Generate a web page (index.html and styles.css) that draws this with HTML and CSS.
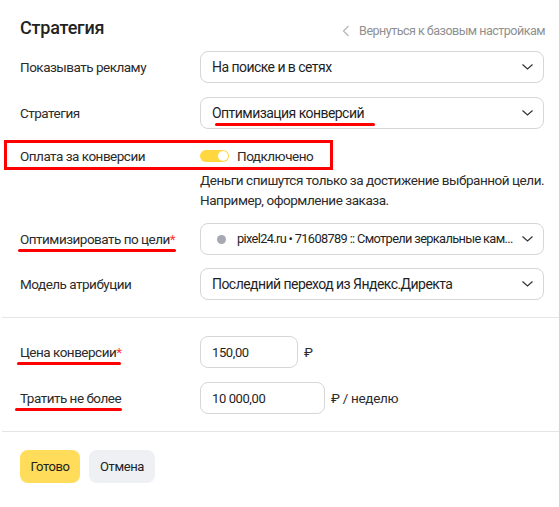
FILE: index.html
```html
<!DOCTYPE html>
<html lang="ru">
<head>
<meta charset="utf-8">
<title>Стратегия</title>
<link rel="stylesheet" href="styles.css">
</head>
<body>
<div class="panel">
  <div class="header">
    <h1 class="title">Стратегия</h1>
    <a class="back" href="#">
      <svg class="back-icon" width="8" height="12" viewBox="0 0 8 12"><path d="M6.5 1 L1.5 6 L6.5 11" fill="none" stroke="#b8b8b8" stroke-width="1.3"/></svg>
      <span>Вернуться к базовым настройкам</span>
    </a>
  </div>

  <div class="row first">
    <div class="label">Показывать рекламу</div>
    <div class="select"><span class="value">На поиске и в сетях</span><svg class="chev" width="11" height="6" viewBox="0 0 11 6"><path d="M0.5 0.5 L5.5 5 L10.5 0.5" fill="none" stroke="#333" stroke-width="1.2"/></svg></div>
  </div>

  <div class="row">
    <div class="label">Стратегия</div>
    <div class="select"><span class="value"><span class="mark mark-strategy">Оптимизация конверсий</span></span><svg class="chev" width="11" height="6" viewBox="0 0 11 6"><path d="M0.5 0.5 L5.5 5 L10.5 0.5" fill="none" stroke="#333" stroke-width="1.2"/></svg></div>
  </div>

  <div class="row toggle-row">
    <div class="callout"></div>
    <div class="label">Оплата за конверсии</div>
    <div class="toggle-wrap"><span class="toggle"><span class="knob"></span></span><span>Подключено</span></div>
  </div>
  <div class="row hint-row">
    <div></div>
    <div class="hint">Деньги спишутся только за достижение выбранной цели.<br>Например, оформление заказа.</div>
  </div>

  <div class="row goal-row">
    <div class="label"><span class="mark mark-goal">Оптимизировать по цели<span class="req">*</span></span></div>
    <div class="select"><span class="value goal"><span class="dot"></span>pixel24.ru • 71608789 :: Смотрели зеркальные кам...</span><svg class="chev" width="11" height="6" viewBox="0 0 11 6"><path d="M0.5 0.5 L5.5 5 L10.5 0.5" fill="none" stroke="#333" stroke-width="1.2"/></svg></div>
  </div>

  <div class="row attr-row">
    <div class="label">Модель атрибуции</div>
    <div class="select"><span class="value">Последний переход из Яндекс.Директа</span><svg class="chev" width="11" height="6" viewBox="0 0 11 6"><path d="M0.5 0.5 L5.5 5 L10.5 0.5" fill="none" stroke="#333" stroke-width="1.2"/></svg></div>
  </div>

  <div class="divider"></div>

  <div class="row money-first">
    <div class="label"><span class="mark mark-price">Цена конверсии<span class="req">*</span></span></div>
    <div class="field"><div class="input input-price">150,00</div><span class="unit">₽</span></div>
  </div>

  <div class="row">
    <div class="label"><span class="mark mark-limit">Тратить не более</span></div>
    <div class="field"><div class="input input-limit">10 000,00</div><span class="unit">₽ / неделю</span></div>
  </div>

  <div class="divider"></div>

  <div class="buttons">
    <button class="btn btn-primary">Готово</button>
    <button class="btn btn-secondary">Отмена</button>
  </div>
</div>
</body>
</html>
```

FILE: styles.css
```css
* { box-sizing: border-box; }

html, body {
  margin: 0;
  padding: 0;
  background: #fff;
}

body {
  font-family: Roboto, "Liberation Sans", Arial, sans-serif;
  font-size: 13.5px;
  letter-spacing: -0.5px;
  color: #2b2b2b;
}

.panel {
  padding: 16px 15px 20px 20px;
}

.header {
  display: flex;
  align-items: center;
  justify-content: space-between;
  height: 24px;
}

.title {
  margin: 0;
  font-size: 18px;
  font-weight: 500;
  letter-spacing: -0.2px;
  line-height: 24px;
  color: #222;
}

.back {
  display: flex;
  align-items: center;
  gap: 9px;
  color: #8f8f8f;
  font-size: 12.5px;
  letter-spacing: -0.5px;
  text-decoration: none;
  margin-top: 5px;
  margin-right: -1px;
}

.back-icon { display: block; }

.row {
  display: grid;
  grid-template-columns: 180px 1fr;
  align-items: center;
  margin-top: 14px;
}

.row.first { margin-top: 11px; }

.label {
  line-height: 20px;
}

.select {
  height: 32px;
  border: 1px solid #d6d6d6;
  border-radius: 8px;
  display: flex;
  align-items: center;
  justify-content: space-between;
  padding: 0 10px 0 11px;
  font-size: 14px;
  letter-spacing: -0.55px;
  color: #1f1f1f;
}

.value {
  white-space: nowrap;
  line-height: 20px;
}

.value.goal {
  display: flex;
  align-items: center;
  font-size: 12.8px;
  letter-spacing: -0.65px;
  padding-left: 5px;
}

.dot {
  width: 9px;
  height: 9px;
  border-radius: 50%;
  background: #a6a9b3;
  margin-right: 11px;
  flex: none;
}

.chev { flex: none; display: block; }

.mark {
  position: relative;
  display: inline-block;
}

.mark::after {
  content: "";
  position: absolute;
  height: 3px;
  bottom: -3px;
  background: #f00;
  border-radius: 2px;
}

.mark-strategy::after { left: 3px; right: -11px; }
.mark-goal::after { left: -2px; right: -1px; }
.mark-price::after { left: -3px; right: 1px; }
.mark-limit::after { left: -5px; right: -1px; }

.req { color: #f33; }

.toggle-row {
  position: relative;
  margin-top: 17px;
}

.callout {
  position: absolute;
  left: -16px;
  top: -6px;
  width: 329px;
  height: 30px;
  border: 3px solid #f00;
}

.toggle-wrap {
  display: flex;
  align-items: center;
  gap: 8px;
  line-height: 20px;
}

.toggle {
  width: 29px;
  height: 12px;
  border-radius: 6px;
  background: #ffd740;
  position: relative;
  flex: none;
}

.knob {
  position: absolute;
  right: 1px;
  top: 1px;
  width: 10px;
  height: 10px;
  border-radius: 50%;
  background: #fff;
}

.hint-row { margin-top: 4px; }

.hint {
  font-size: 13.5px;
  letter-spacing: -0.45px;
  line-height: 20px;
  white-space: nowrap;
}

.goal-row { margin-top: 13px; }
.attr-row { margin-top: 13px; }

.divider {
  height: 1px;
  background: #e5e5e5;
  margin: 17px -15px 0 -18px;
}

.money-first { margin-top: 18px; }

.field {
  display: flex;
  align-items: center;
  gap: 6px;
}

.input {
  height: 32px;
  border: 1px solid #d6d6d6;
  border-radius: 8px;
  padding: 0 11px;
  display: flex;
  align-items: center;
  font-size: 13px;
  letter-spacing: -0.4px;
  color: #1f1f1f;
}

.input-price { width: 98px; }
.input-limit { width: 125px; }

.unit { letter-spacing: -0.3px; }

.buttons {
  display: flex;
  gap: 9px;
  margin-top: 18px;
}

.btn {
  height: 33px;
  border: none;
  border-radius: 8px;
  font-family: inherit;
  font-size: 13px;
  letter-spacing: -0.4px;
  color: #222;
  padding: 0;
}

.btn-primary { background: #ffdc5a; width: 60px; }
.btn-secondary { background: #eef0f4; width: 66px; }
```
